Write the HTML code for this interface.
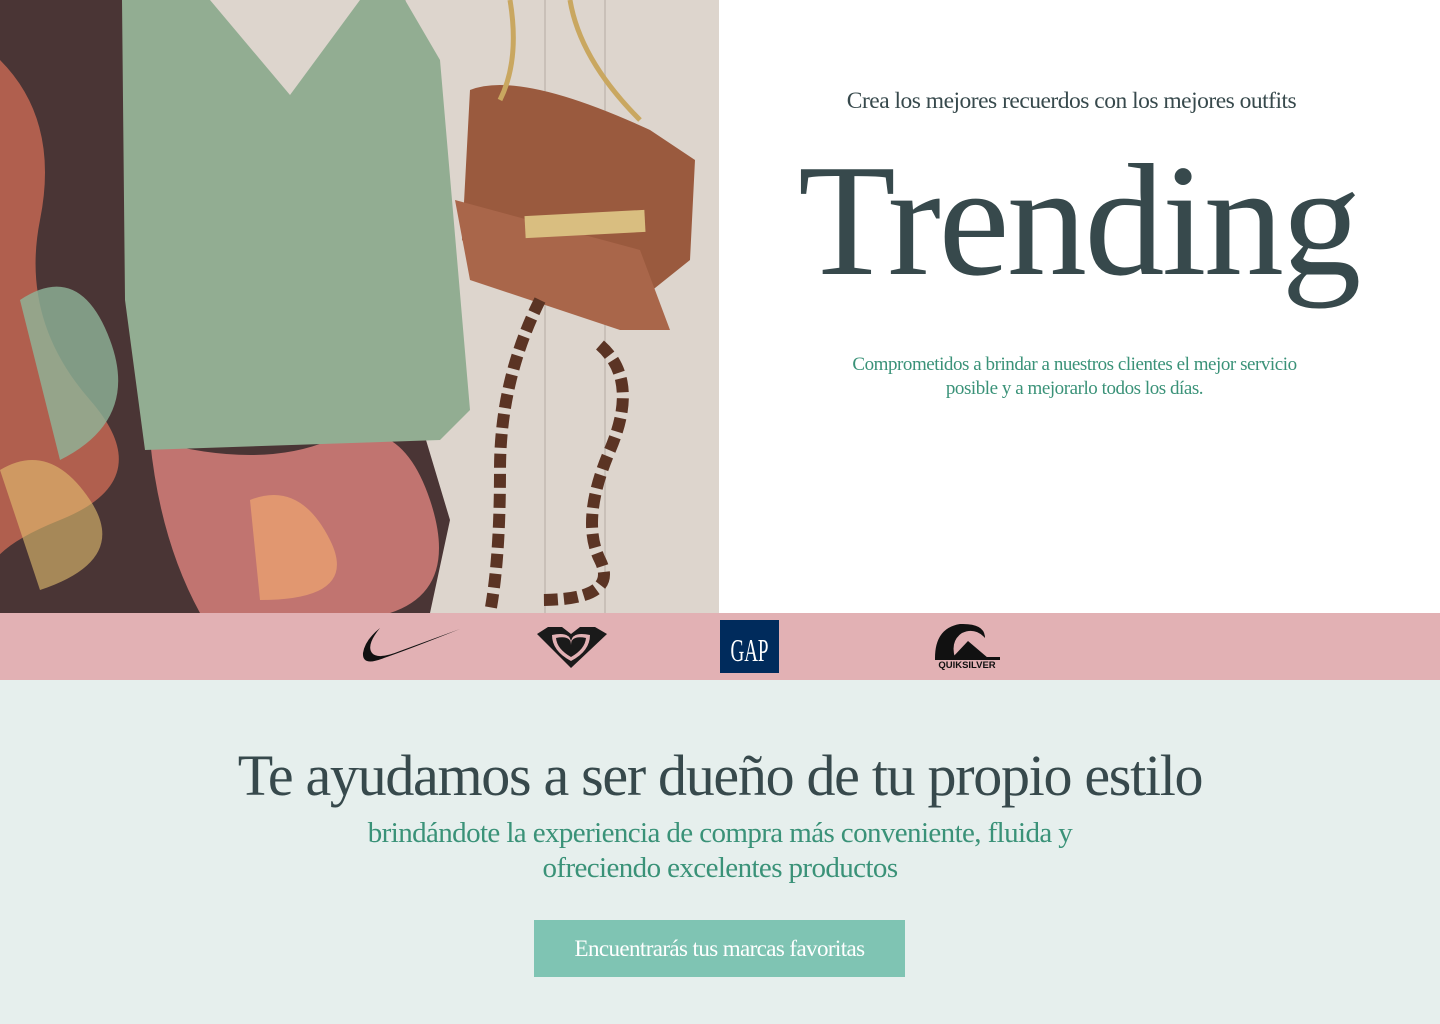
<!DOCTYPE html>
<html><head><meta charset="utf-8"><style>
*{margin:0;padding:0;box-sizing:border-box}
body{width:1440px;height:1024px;overflow:hidden;background:#fff;font-family:"Liberation Serif",serif;position:relative}
.photo{position:absolute;left:0;top:0;width:719px;height:613px;background:#ddd5cd}
.right{position:absolute;left:719px;top:0;width:721px;height:613px;background:#fff}
.t1{position:absolute;left:0;width:721px;top:88px;text-align:center;font-size:23.5px;color:#37494c;letter-spacing:-0.5px;padding-right:16px}
.big{position:absolute;left:0;width:721px;top:124px;text-align:center;font-size:160px;color:#37494c;letter-spacing:-2.5px;padding-right:2px;line-height:1.2}
.t2{position:absolute;left:0;width:721px;top:353px;text-align:center;font-size:19px;line-height:24px;color:#3a9278;letter-spacing:-0.45px;padding-right:10px}
.strip{position:absolute;left:0;top:613px;width:1440px;height:67px;background:#e2b1b4}
.lower{position:absolute;left:0;top:680px;width:1440px;height:344px;background:#e6efed}
.h{position:absolute;left:0;width:1440px;top:742px;text-align:center;font-size:58px;color:#37494c;letter-spacing:-1.3px}
.s{position:absolute;left:0;width:1440px;top:816px;text-align:center;font-size:29px;line-height:35px;color:#3a9278;letter-spacing:-0.6px}
.btn{position:absolute;left:534px;top:920px;width:371px;height:57px;background:#7fc4b3;color:#fff;font-size:23px;text-align:center;line-height:57px;letter-spacing:-0.6px}
</style></head><body>
<div class="photo">
<svg width="719" height="613" viewBox="0 0 719 613">
<rect width="719" height="613" fill="#ddd5cd"/>
<g stroke="#c9c0b8" stroke-width="2"><line x1="405" y1="0" x2="405" y2="613"/><line x1="545" y1="0" x2="545" y2="613"/><line x1="605" y1="0" x2="605" y2="613"/></g>
<path d="M0 0H130L150 300 160 420 250 440 420 420 450 520 430 613H0Z" fill="#4a3535"/>
<path d="M0 60Q60 120 40 220T90 400 60 520 0 600Z" fill="#c96a55" opacity=".8"/>
<path d="M150 440Q260 470 330 440T430 500 390 613H200Q160 540 150 440Z" fill="#d67f7a" opacity=".85"/>
<path d="M20 300Q80 260 110 340T60 460Z" fill="#8fb59a" opacity=".8"/>
<path d="M250 500Q300 480 330 540T260 600Z" fill="#e8a070" opacity=".8"/>
<path d="M0 470Q50 440 90 500T40 590Z" fill="#e4c070" opacity=".6"/>
<path d="M122 0H210L290 95 360 0H405L440 60 470 410 440 440 145 450 125 300Z" fill="#92ad92"/>
<path d="M470 90Q520 70 650 130L695 160 690 260 640 300 560 260 480 260 462 240Z" fill="#9a5a3e"/>
<path d="M455 200L640 250 670 330 620 330 470 280Z" fill="#a9664a"/>
<rect x="525" y="213" width="120" height="22" fill="#d9be80" transform="rotate(-3 585 224)"/>
<path d="M600 345Q640 380 610 450T600 560 540 600" stroke="#5b3424" stroke-width="12" fill="none" stroke-dasharray="14 6"/>
<path d="M540 300Q500 380 500 470T490 613" stroke="#5b3424" stroke-width="12" fill="none" stroke-dasharray="14 6"/>
<path d="M510 0Q520 60 500 100M570 0Q580 60 640 120" stroke="#c9a760" stroke-width="5" fill="none"/>
</svg>
</div>
<div class="right">
<div class="t1">Crea los mejores recuerdos con los mejores outfits</div>
<div class="big">Trending</div>
<div class="t2">Comprometidos a brindar a nuestros clientes el mejor servicio<br>posible y a mejorarlo todos los días.</div>
</div>
<div class="strip">
<svg width="1440" height="67" viewBox="0 0 1440 67">
<path d="M460 16Q410 36 384 45Q362 54 363 40Q365 27 380 15Q366 32 372 40Q378 47 400 38Z" fill="#111"/>
<path d="M537 21L548 14 562 14 571 21 580 14 595 14 607 21 571 55Z" fill="#1a1a1a"/>
<path d="M552 22Q571 18 571 30Q571 18 590 22 590 38 571 48 552 38 552 22Z" fill="#e2b1b4"/>
<path d="M556 25Q571 22 571 32Q571 22 586 25 585 36 571 44 557 36 556 25Z" fill="#1a1a1a"/>
<rect x="720" y="7" width="59" height="53" fill="#002b5c"/>
<text x="749.5" y="48" text-anchor="middle" fill="#fff" font-family="Liberation Serif,serif" font-size="32" textLength="38" lengthAdjust="spacingAndGlyphs">GAP</text>
<path d="M935 45Q935 15 960 11Q985 10 985 25Q975 14 962 20Q950 28 955 45Z" fill="#111"/>
<path d="M952 45L968 28 988 45Z" fill="#111"/>
<rect x="935" y="44" width="65" height="3" fill="#111"/>
<text x="967" y="55" text-anchor="middle" font-family="Liberation Sans,sans-serif" font-weight="bold" font-size="9.5" fill="#111">QUIKSILVER</text>
</svg>
</div>
<div class="lower"></div>
<div class="h">Te ayudamos a ser dueño de tu propio estilo</div>
<div class="s">brindándote la experiencia de compra más conveniente, fluida y<br>ofreciendo excelentes productos</div>
<div class="btn">Encuentrarás tus marcas favoritas</div>
</body></html>
